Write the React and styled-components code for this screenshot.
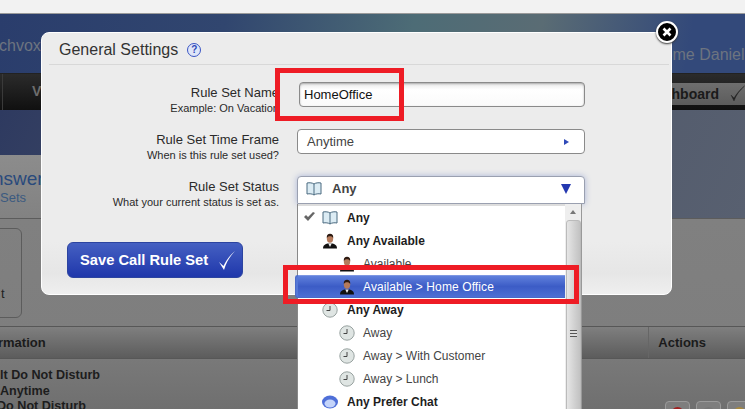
import React from 'react'
import styled, { createGlobalStyle } from 'styled-components'

const Global = createGlobalStyle`
  html, body { margin: 0; padding: 0; }
  body { width: 745px; height: 409px; overflow: hidden; font-family: "Liberation Sans", Arial, sans-serif; }
`

const Page = styled.div`
  position: relative;
  width: 745px;
  height: 409px;
  overflow: hidden;
  background: #6e6e6e;
  display: flex;
  flex-direction: column;
`

const TopStrip = styled.div`
  height: 13px;
  flex-shrink: 0;
  background: #f2f2f2;
  border-bottom: 1px solid #9a9a9a;
`

const Header = styled.div`
  height: 59px;
  flex-shrink: 0;
  display: flex;
  justify-content: space-between;
  box-sizing: border-box;
  background: linear-gradient(100deg, #2a3d6c 0%, #31466f 30%, #4d6c76 55%, #5a6c74 72%, #33497a 92%);
  color: #6d7480;
  font-size: 16px;
  line-height: 18px;
`

const BrandText = styled.span`
  margin: 23px 0 0 -1px;
`

const WelcomeText = styled.span`
  margin: 32px -12px 0 0;
  white-space: nowrap;
`

const NavBar = styled.div`
  height: 37px;
  flex-shrink: 0;
  box-sizing: border-box;
  display: flex;
  align-items: center;
  justify-content: space-between;
  padding-top: 3px;
  background: linear-gradient(#2b2b2b, #101010);
  border-top: 1px solid #222;
  color: #6d6d6d;
  font: bold 14px "Liberation Sans", sans-serif;
`

const NavLeft = styled.div`
  align-self: stretch;
  margin: -3px 0 0 2px;
  padding: 9px 0 0 29px;
  border-left: 1px solid #3a3a3a;
`

const NavActive = styled.div`
  display: flex;
  align-items: center;
  gap: 11px;
  height: 22px;
  padding: 0 0 0 20px;
  background: linear-gradient(#6e6e6e, #5c5c5c);
  color: #1a1a1a;
`

const Band = styled.div`
  height: 108px;
  flex-shrink: 0;
  display: flex;
  align-items: flex-end;
  background: linear-gradient(115deg, #2e3a60, #4b5468 45%, #586070);
`

const TitlePanel = styled.div`
  width: 260px;
  height: 63px;
  padding-top: 13px;
  box-sizing: border-box;
  background: linear-gradient(#8c8c8c, #828282);
  color: #2a4a7c;
  font-size: 19px;
  line-height: 22px;
`

const TitleText = styled.div`
  margin-left: -7px;
`

const TitleSub = styled.div`
  font-size: 13px;
  line-height: 16px;
  color: #3b5a80;
`

const Content = styled.div`
  flex: 1;
  min-height: 0;
  border-top: 1px solid #5c5c5c;
  background: linear-gradient(#808080, #7e7e7e 60%, #6f6f6f);
  color: #1c1c1c;
`

const SideCard = styled.div`
  position: absolute;
  left: -20px;
  top: 228px;
  width: 40px;
  height: 88px;
  border: 1px solid #5c5c5c;
  border-radius: 6px;
  font-size: 13px;
  color: #222;
`

const CardText = styled.div`
  margin: 57px 0 0 20px;
`

const TableHead = styled.div`
  height: 33px;
  margin-top: 107px;
  box-sizing: border-box;
  display: flex;
  align-items: center;
  justify-content: space-between;
  padding: 0 39px 0 0;
  border-top: 1px solid #575757;
  border-bottom: 1px solid #575757;
  background: linear-gradient(#7f7f7f, #5c5c5c);
  font: bold 13px "Liberation Sans", sans-serif;
  color: #1b1b1b;
`

const HeadName = styled.span`
  margin-left: -2px;
`

const HeadActions = styled.span`
  align-self: stretch;
  display: flex;
  align-items: center;
  padding-left: 9px;
  border-left: 1px solid #666;
`

const TableRows = styled.div`
  padding-top: 9px;
  display: flex;
  justify-content: space-between;
`

const RowCell = styled.div`
  font: bold 12.600px/15.500px "Liberation Sans", sans-serif;
  color: #1d1d1d;
`

const RowLine = styled.div`
  margin-left: ${p => p.$indent}px;
`

const ActionIcons = styled.div`
  display: flex;
  gap: 6px;
  padding-top: 33px;
  margin-right: -7px;
`

const ActionBox = styled.div`
  width: 25px;
  height: 24px;
  box-sizing: border-box;
  border: 1px solid #9a9a9a;
  border-radius: 4px;
  background: #7e7e7e;
  display: flex;
  justify-content: center;
  padding-top: 5px;
`

const ActionDot = styled.div`
  width: 13px;
  height: 13px;
  border-radius: 50%;
  background: ${p => p.$color};
`

const Modal = styled.div`
  position: absolute;
  left: 41px;
  top: 32px;
  width: 631px;
  height: 263px;
  box-sizing: border-box;
  padding: 0 2px 0 7px;
  background: linear-gradient(#ececec 80%, #e6e6e6 92%, #efefef);
  border: 1px solid #fff;
  border-radius: 8px;
  color: #222;
`

const ModalTitle = styled.div`
  height: 32px;
  padding-left: 10px;
  display: flex;
  align-items: center;
  gap: 9px;
  padding-top: 3px;
  box-sizing: border-box;
  border-bottom: 1px solid #d8d8d8;
  font-size: 16px;
  color: #333;
`

const HelpIcon = styled.span`
  width: 12px;
  height: 12px;
  border-radius: 50%;
  border: 1.500px solid #3a55c4;
  background: #dfe6f8;
  color: #2f49b8;
  font: bold 10px/12px "Liberation Sans", sans-serif;
  text-align: center;
`

const Form = styled.div`
  display: flex;
  flex-direction: column;
  gap: 22px;
  padding-top: 17px;
`

const FormRow = styled.div`
  display: flex;
  align-items: flex-start;
  height: 25px;
`

const LabelCol = styled.div`
  width: 230px;
  padding-top: 4px;
  text-align: right;
  flex-shrink: 0;
`

const LabelMain = styled.div`
  font-size: 13px;
  line-height: 14px;
  color: #2a2a2a;
`

const LabelSub = styled.div`
  font-size: 11px;
  line-height: 14px;
  margin-top: 1px;
  color: #2a2a2a;
`

const NameInput = styled.input`
  width: 286px;
  height: 25px;
  margin-left: 20px;
  box-sizing: border-box;
  padding: 0 0 1px 4px;
  border: 1px solid #8a8a8a;
  border-radius: 4px;
  outline: none;
  background: linear-gradient(#e8e8e8, #fff 30%, #fafafa);
  box-shadow: inset 0 1px 2px #aaa;
  font: 13px "Liberation Sans", sans-serif;
  color: #111;
`

const SelectBox = styled.div`
  width: 288px;
  height: ${p => (p.$open ? 28 : 25)}px;
  margin-left: 18px;
  box-sizing: border-box;
  padding: ${p => (p.$open ? '0 13px 3px 8px' : '0 15px 0 9px')};
  display: flex;
  align-items: center;
  justify-content: space-between;
  background: #fff;
  border: 1px solid ${p => (p.$open ? '#9aa0b0' : '#8a8a8a')};
  border-radius: ${p => (p.$open ? '4px 4px 0 0' : '4px')};
  box-shadow: ${p => (p.$open ? '0 0 6px #a9b4d8' : 'none')};
  font-size: 13px;
  color: #444;
  flex-shrink: 0;
`

const SelectValue = styled.span`
  display: flex;
  align-items: center;
  gap: 10px;
  font-weight: ${p => (p.$bold ? 'bold' : 'normal')};
`

const SaveButton = styled.button`
  position: absolute;
  left: 25px;
  top: 209px;
  width: 176px;
  height: 36px;
  box-sizing: border-box;
  padding: 0 0 0 12px;
  display: flex;
  align-items: center;
  gap: 10px;
  border: 1px solid #2c44a0;
  border-radius: 6px;
  background: linear-gradient(#4560c2, #1f37ab);
  color: #fff;
  font: bold 14.700px "Liberation Sans", sans-serif;
`

const CloseButton = styled.div`
  position: absolute;
  left: 656px;
  top: 21px;
  width: 22px;
  height: 22px;
  box-sizing: border-box;
  background: #000;
  border-radius: 50%;
  border: 2px solid #fff;
  box-shadow: 0 1px 2px #333;
  display: flex;
  align-items: center;
  justify-content: center;
`

const Dropdown = styled.div`
  position: absolute;
  left: 297px;
  top: 204px;
  width: 285px;
  height: 205px;
  box-sizing: border-box;
  overflow: hidden;
  background: #fff;
  border-left: 1px solid #888;
  border-right: 1px solid #999;
  display: flex;
`

const MenuList = styled.div`
  width: 267px;
  border-top: 2px solid #ddd;
  flex-shrink: 0;
`

const MenuItem = styled.div`
  height: 23px;
  display: flex;
  align-items: center;
  box-sizing: border-box;
  padding-left: ${p => (p.$sub ? 41 : 24)}px;
  gap: ${p => (p.$sub ? 8 : 9)}px;
  font-size: 12px;
  font-weight: ${p => (p.$bold ? 'bold' : 'normal')};
  color: ${p => (p.$active ? '#fff' : p.$bold ? '#1e1e1e' : '#444')};
  position: relative;
  ${p => p.$active && `
    padding-left: 41px;
    letter-spacing: .1px;
    border-top: 1px solid #7d97e2;
    border-bottom: 1px solid #4a6ac8;
    background: linear-gradient(#5f80dc, #3c5cc6 50%, #4d6fd4);
  `}
`

const ActiveEdge = styled.div`
  position: absolute;
  left: 295px;
  top: 275px;
  width: 3px;
  height: 23px;
  box-sizing: border-box;
  border: 1px solid #4a6ac8;
  border-right: 0;
  border-radius: 3px 0 0 3px;
  background: #5577d6;
`

const CheckMark = styled.span`
  position: absolute;
  left: 6px;
  top: 5px;
  display: flex;
`

const ScrollTrack = styled.div`
  width: 16px;
  background: #eee;
  display: flex;
  flex-direction: column;
  align-items: center;
  flex-shrink: 0;
`

const ScrollArrow = styled.div`
  height: 16px;
  width: 100%;
  flex-shrink: 0;
  display: flex;
  align-items: center;
  justify-content: center;
  &::before {
    content: '';
    border: 3px solid transparent;
    border-top: 0;
    border-bottom: 4px solid #777;
  }
`

const ScrollThumb = styled.div`
  width: 15px;
  height: 226px;
  flex-shrink: 0;
  box-sizing: border-box;
  border: 1px solid #bbb;
  border-radius: 3px 3px 0 0;
  background: linear-gradient(90deg, #e6e6e6, #d0d0d0 60%, #c2c2c2);
  display: flex;
  align-items: center;
  justify-content: center;
`

const Grip = styled.div`
  width: 7px;
  height: 7px;
  background: repeating-linear-gradient(#555 0 1px, #ddd 1px 3px);
`

const RedBox = styled.div`
  position: absolute;
  left: ${p => p.$left}px;
  top: ${p => p.$top}px;
  width: ${p => p.$width}px;
  height: ${p => p.$height}px;
  box-sizing: border-box;
  border: 5px solid #ee1c25;
  pointer-events: none;
`

const Book = () => (
  <svg width="16" height="16" viewBox="0 0 16 16">
    <path d="M8 3C6.500 1.800 3.500 1.500 1 2v11c2.500-.5 5.500-.2 7 1 1.500-1.200 4.500-1.500 7-1V2C12.500 1.500 9.500 1.800 8 3z" fill="#dcecf4" stroke="#4a6a80" />
    <path d="M8 3v11" stroke="#4a6a80" />
  </svg>
)

const Person = () => (
  <svg width="16" height="16" viewBox="0 0 16 16">
    <path d="M1 15.500c0-3.500 2.500-4.500 4.500-5h5c2 .5 4.500 1.500 4.500 5z" fill="#111" />
    <path d="M6.300 10.500 8 14l1.700-3.500z" fill="#eee" />
    <ellipse cx="8" cy="5.500" rx="3.200" ry="4.200" fill="#b57b5c" />
    <path d="M4.800 5C4.500 2 6 .8 8 .8s3.500 1.200 3.200 4.200C10.500 3.500 9 3.200 8 3.200S5.500 3.500 4.800 5z" fill="#2b1a12" />
  </svg>
)

const Clock = () => (
  <svg width="16" height="16" viewBox="0 0 16 16">
    <circle cx="8" cy="8" r="7.200" fill="#dfe5e3" stroke="#98a2a0" />
    <path d="M8 4v4.500H4.500" fill="none" stroke="#444" />
  </svg>
)

const Bubble = () => (
  <svg width="16" height="16" viewBox="0 0 16 16">
    <ellipse cx="8" cy="8" rx="8" ry="6.500" fill="#4f6fd8" />
    <ellipse cx="8" cy="9.500" rx="5.500" ry="4" fill="#c4d4fa" />
  </svg>
)

const icons = { book: Book, person: Person, clock: Clock, bubble: Bubble }

const menu = [
  { icon: 'book', label: 'Any', bold: true, checked: true },
  { icon: 'person', label: 'Any Available', bold: true },
  { icon: 'person', label: 'Available', sub: true },
  { icon: 'person', label: 'Available > Home Office', sub: true, active: true },
  { icon: 'clock', label: 'Any Away', bold: true },
  { icon: 'clock', label: 'Away', sub: true },
  { icon: 'clock', label: 'Away > With Customer', sub: true },
  { icon: 'clock', label: 'Away > Lunch', sub: true },
  { icon: 'bubble', label: 'Any Prefer Chat', bold: true },
]

export default function App() {
  return (
    <Page>
      <Global />
      <TopStrip />
      <Header>
        <BrandText>chvox</BrandText>
        <WelcomeText>Welcome Danielle</WelcomeText>
      </Header>
      <NavBar>
        <NavLeft>V</NavLeft>
        <NavActive>
          Switchboard
          <svg width="15" height="17" viewBox="0 0 15 17">
            <path d="M1 10l3 6C6 10 10 5 14.500 1 9.500 5 6.500 9 4 13z" fill="#222" stroke="#222" strokeWidth=".4" />
          </svg>
        </NavActive>
      </NavBar>
      <Band>
        <TitlePanel>
          <TitleText>nswer</TitleText>
          <TitleSub>Sets</TitleSub>
        </TitlePanel>
      </Band>
      <Content>
        <TableHead>
          <HeadName>rmation</HeadName>
          <HeadActions>Actions</HeadActions>
        </TableHead>
        <TableRows>
          <RowCell>
            <RowLine $indent={0}>lt Do Not Disturb</RowLine>
            <RowLine $indent={0}>Anytime</RowLine>
            <RowLine $indent={-3}>Do Not Disturb</RowLine>
          </RowCell>
          <ActionIcons>
            <ActionBox><ActionDot $color="#a02020" /></ActionBox>
            <ActionBox><ActionDot $color="#777" /></ActionBox>
            <ActionBox><ActionDot $color="#a88a40" /></ActionBox>
          </ActionIcons>
        </TableRows>
      </Content>
      <SideCard><CardText>t</CardText></SideCard>
      <Modal>
        <ModalTitle>
          General Settings <HelpIcon>?</HelpIcon>
        </ModalTitle>
        <Form>
          <FormRow>
            <LabelCol>
              <LabelMain>Rule Set Name</LabelMain>
              <LabelSub>Example: On Vacation</LabelSub>
            </LabelCol>
            <NameInput defaultValue="HomeOffice" />
          </FormRow>
          <FormRow>
            <LabelCol>
              <LabelMain>Rule Set Time Frame</LabelMain>
              <LabelSub>When is this rule set used?</LabelSub>
            </LabelCol>
            <SelectBox>
              <SelectValue>Anytime</SelectValue>
              <svg width="5" height="6" viewBox="0 0 5 6"><path d="M0 0l5 3-5 3z" fill="#2f49b8" /></svg>
            </SelectBox>
          </FormRow>
          <FormRow>
            <LabelCol>
              <LabelMain>Rule Set Status</LabelMain>
              <LabelSub>What your current status is set as.</LabelSub>
            </LabelCol>
            <SelectBox $open>
              <SelectValue $bold><Book /> Any</SelectValue>
              <svg width="10" height="10" viewBox="0 0 10 10"><path d="M0 0h10L5 10z" fill="#2438b0" /></svg>
            </SelectBox>
          </FormRow>
        </Form>
        <SaveButton>
          Save Call Rule Set
          <svg width="18" height="21" viewBox="0 0 18 21">
            <path d="M1 12l5 8C8 13 12 6 17 1 11 6 8 11 5.500 16z" fill="#fff" />
          </svg>
        </SaveButton>
      </Modal>
      <CloseButton>
        <svg width="10" height="10" viewBox="0 0 10 10"><path d="M1.500 1.500l7 7M8.500 1.500l-7 7" stroke="#fff" strokeWidth="2.600" /></svg>
      </CloseButton>
      <Dropdown>
        <MenuList>
          {menu.map(item => {
            const Icon = icons[item.icon]
            return (
              <MenuItem key={item.label} $bold={item.bold} $sub={item.sub} $active={item.active}>
                {item.checked && (
                  <CheckMark>
                    <svg width="11" height="11" viewBox="0 0 11 11"><path d="M0 6l2-2 2 2 5-5 2 1-7 8z" fill="#666" /></svg>
                  </CheckMark>
                )}
                <Icon />
                {item.label}
              </MenuItem>
            )
          })}
        </MenuList>
        <ScrollTrack>
          <ScrollArrow />
          <ScrollThumb><Grip /></ScrollThumb>
        </ScrollTrack>
      </Dropdown>
      <ActiveEdge />
      <RedBox $left={275} $top={68} $width={129} $height={53} />
      <RedBox $left={283} $top={265} $width={296} $height={39} />
    </Page>
  )
}
